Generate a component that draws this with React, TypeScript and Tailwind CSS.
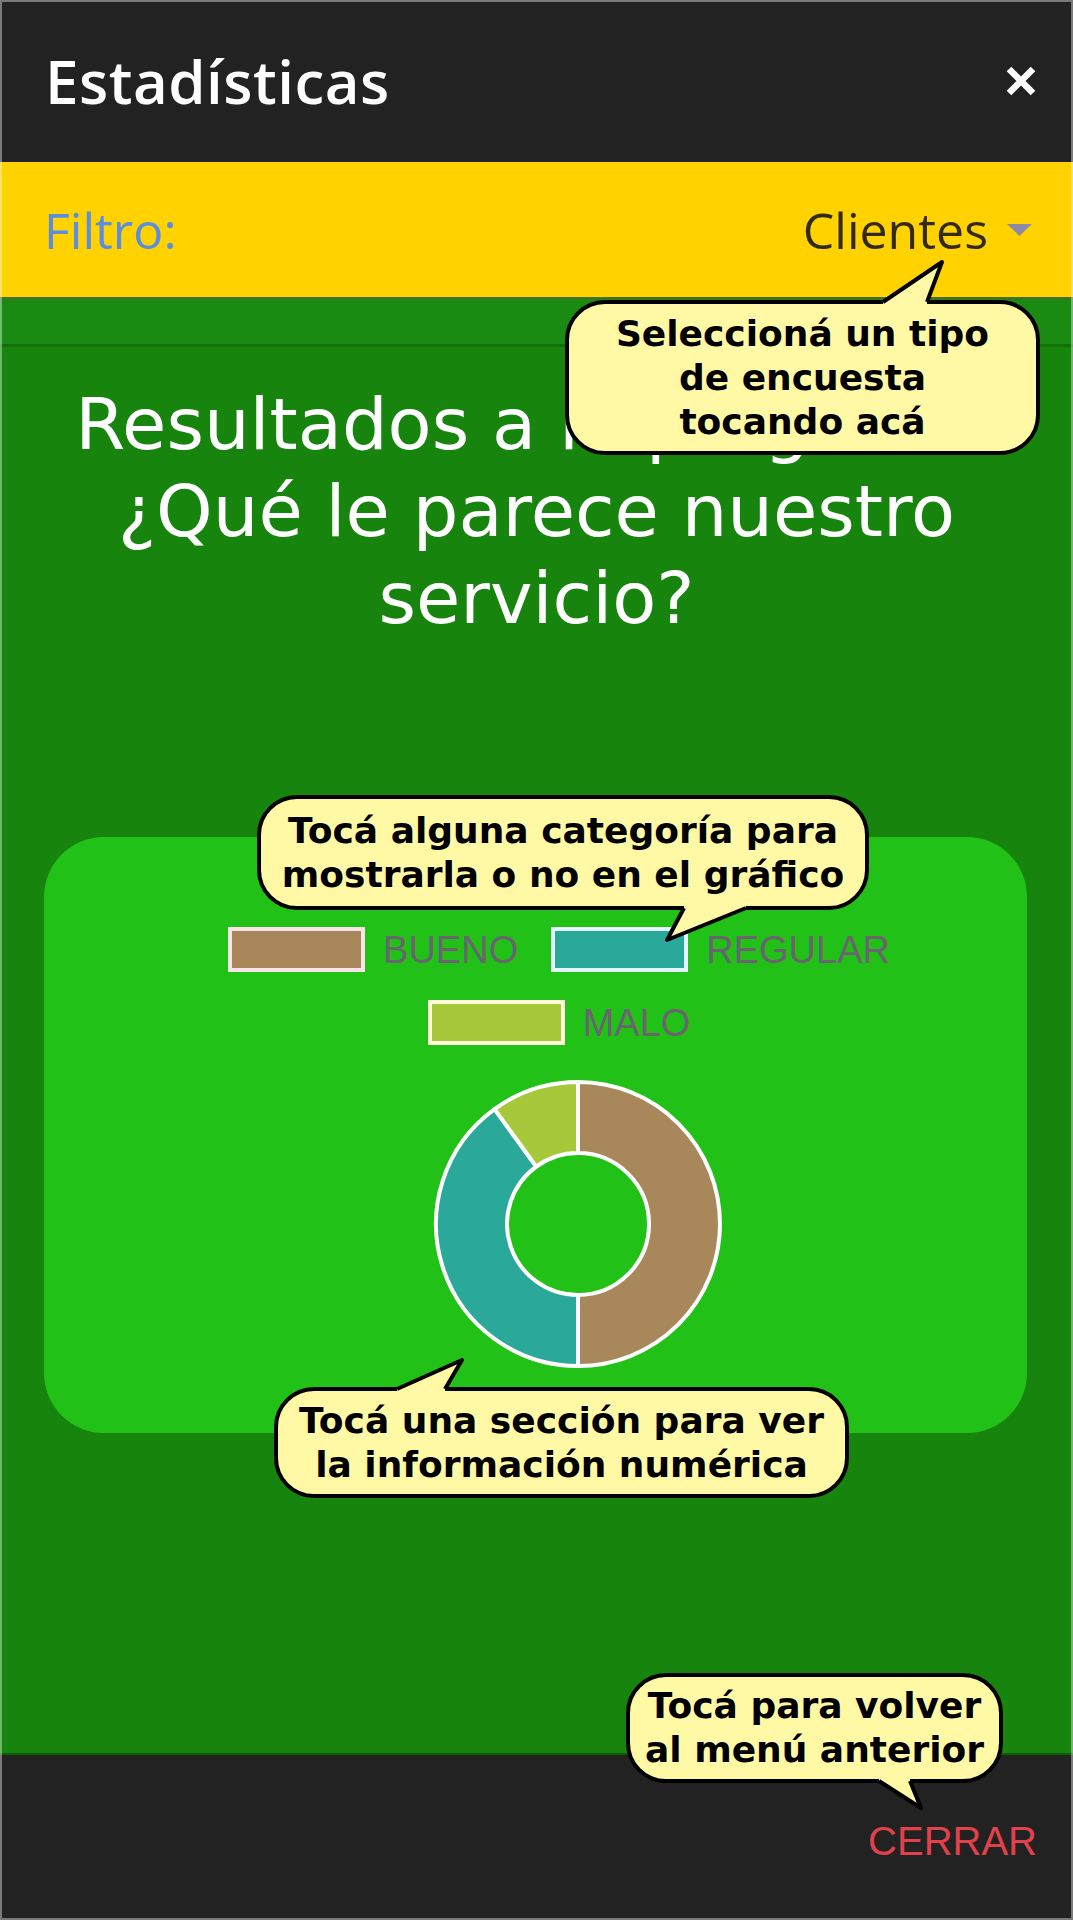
import type { ReactNode } from 'react'

// ── Donut geometry ────────────────────────────────────────────────────────────

const SIZE = 296
const C = SIZE / 2
const R_OUT = 142
const R_IN = 71

const SLICES = [
  { label: 'BUENO', value: 5, color: '#a8875a', edge: '#fbe3ea' },
  { label: 'REGULAR', value: 4, color: '#2aa99b', edge: '#e4f7fb' },
  { label: 'MALO', value: 1, color: '#a7c83b', edge: '#fffbd9' },
]

function pt(r: number, deg: number): [number, number] {
  const rad = (deg * Math.PI) / 180
  return [C + r * Math.sin(rad), C - r * Math.cos(rad)]
}

function slicePath(a0: number, a1: number) {
  const large = a1 - a0 > 180 ? 1 : 0
  const [x0, y0] = pt(R_OUT, a0)
  const [x1, y1] = pt(R_OUT, a1)
  const [x2, y2] = pt(R_IN, a1)
  const [x3, y3] = pt(R_IN, a0)
  return `M${x0} ${y0} A${R_OUT} ${R_OUT} 0 ${large} 1 ${x1} ${y1} L${x2} ${y2} A${R_IN} ${R_IN} 0 ${large} 0 ${x3} ${y3} Z`
}

function Donut() {
  const total = SLICES.reduce((s, d) => s + d.value, 0)
  let start = 0
  return (
    <svg width={SIZE} height={SIZE} viewBox={`0 0 ${SIZE} ${SIZE}`}>
      {SLICES.map(s => {
        const a0 = start
        const a1 = start + (s.value / total) * 360
        start = a1
        return (
          <path key={s.label} d={slicePath(a0, a1)} fill={s.color} stroke="#ffffff" strokeWidth={4} strokeLinejoin="round" />
        )
      })}
    </svg>
  )
}

function LegendItem({ label, color, edge }: { label: string; color: string; edge: string }) {
  return (
    <div className="flex items-center gap-[18px]">
      <div className="w-[137px] h-[45px] border-[4px]" style={{ backgroundColor: color, borderColor: edge }} />
      <span className="text-[38px] leading-none text-[#6a6470] font-['Liberation_Sans',Arial,sans-serif]">{label}</span>
    </div>
  )
}

// ── Speech bubbles ────────────────────────────────────────────────────────────

type P = [number, number]

function Tail({ b1, b2, apex, inward }: { b1: P; b2: P; apex: P; inward: number }) {
  const xs = [b1[0], b2[0], apex[0]]
  const ys = [b1[1], b2[1], apex[1], b1[1] + inward]
  const left = Math.min(...xs) - 6
  const top = Math.min(...ys) - 6
  const w = Math.max(...xs) - left + 6
  const h = Math.max(...ys) - top + 6
  const m = (p: P, dy = 0) => `${p[0] - left},${p[1] - top + dy}`
  return (
    <svg className="absolute pointer-events-none" style={{ left, top }} width={w} height={h}>
      <polygon points={`${m(b1, inward)} ${m(b1)} ${m(apex)} ${m(b2)} ${m(b2, inward)}`} fill="#fff9a6" />
      <polyline points={`${m(b1)} ${m(apex)} ${m(b2)}`} fill="none" stroke="#000" strokeWidth={4} strokeLinejoin="round" />
    </svg>
  )
}

function Bubble({ className, children }: { className: string; children: ReactNode }) {
  return (
    <div
      className={`absolute flex items-center justify-center rounded-[40px] border-[4px] border-black bg-[#fff9a6] text-center text-black text-[36px] leading-[44px] font-bold font-['DejaVu_Sans',sans-serif] ${className}`}
    >
      <p>{children}</p>
    </div>
  )
}

// ── App ───────────────────────────────────────────────────────────────────────

export default function App() {
  return (
    <div className="relative w-[1073px] h-[1920px] overflow-hidden flex flex-col font-['Open_Sans',sans-serif]">
      {/* header */}
      <div className="h-[162px] bg-[#222222] flex items-center justify-between pl-[45px] pr-[35px]">
        <h1 className="text-white text-[60px] font-semibold leading-none tracking-[0.5px]">Estadísticas</h1>
        <svg width="34" height="30" viewBox="0 0 34 30">
          <path d="M5 3 L29 27 M29 3 L5 27" stroke="#ffffff" strokeWidth={6.5} />
        </svg>
      </div>

      {/* filter */}
      <div className="h-[135px] bg-[#ffd200] flex items-center justify-between pl-[44px] pr-[41px]">
        <span className="text-[50px] leading-none text-[#5b8ee0]">Filtro:</span>
        <div className="flex items-center gap-[19px]">
          <span className="text-[50px] leading-none text-[#332a14]">Clientes</span>
          <svg width="25" height="12" viewBox="0 0 25 12">
            <polygon points="0,0 25,0 12.5,12" fill="#8d8aa6" />
          </svg>
        </div>
      </div>

      {/* body */}
      <div className="h-[1456px] bg-[#17840e] flex flex-col">
        <div className="h-[50px] bg-[#1a8b12] border-t-[2px] border-t-[#4f6a0a] border-b-[3px] border-b-[#127009]" />
        <p className="mt-[34px] text-center text-white text-[72px] leading-[87px] font-['DejaVu_Sans',sans-serif]">
          Resultados a la pregunta:
          <br />
          ¿Qué le parece nuestro
          <br />
          servicio?
        </p>

        <div className="mt-[195px] ml-[44px] mr-[46px] rounded-[60px] bg-[#22c117] pt-[90px] pb-[61px] pl-[47px] flex flex-col items-center">
          <div className="flex items-center gap-[33px]">
            <LegendItem {...SLICES[0]} />
            <LegendItem {...SLICES[1]} />
          </div>
          <div className="mt-[28px] flex items-center">
            <LegendItem {...SLICES[2]} />
          </div>
          <div className="mt-[31px] pl-[38px]">
            <Donut />
          </div>
        </div>
      </div>

      {/* footer */}
      <div className="flex-1 bg-[#222222] border-t-2 border-t-[#0f5c08] flex items-center justify-end pr-[36px] pt-[6px]">
        <span className="text-[40px] leading-none text-[#e0414a] font-['Liberation_Sans',Arial,sans-serif]">CERRAR</span>
      </div>

      {/* hint bubbles */}
      <Bubble className="left-[565px] top-[300px] w-[475px] h-[155px]">
        Seleccioná un tipo
        <br />
        de encuesta
        <br />
        tocando acá
      </Bubble>
      <Tail b1={[883, 302]} b2={[927, 302]} apex={[942, 262]} inward={7} />

      <Bubble className="left-[257px] top-[795px] w-[612px] h-[115px]">
        Tocá alguna categoría para
        <br />
        mostrarla o no en el gráfico
      </Bubble>
      <Tail b1={[684, 908]} b2={[746, 908]} apex={[667, 940]} inward={-7} />

      <Bubble className="left-[274px] top-[1387px] w-[575px] h-[111px]">
        Tocá una sección para ver
        <br />
        la información numérica
      </Bubble>
      <Tail b1={[397, 1389]} b2={[445, 1389]} apex={[462, 1360]} inward={7} />

      <Bubble className="left-[626px] top-[1673px] w-[377px] h-[110px]">
        Tocá para volver
        <br />
        al menú anterior
      </Bubble>
      <Tail b1={[879, 1781]} b2={[910, 1781]} apex={[921, 1808]} inward={-7} />

      {/* window frame */}
      <div className="absolute inset-0 border-2 border-white/40 pointer-events-none" />
    </div>
  )
}
